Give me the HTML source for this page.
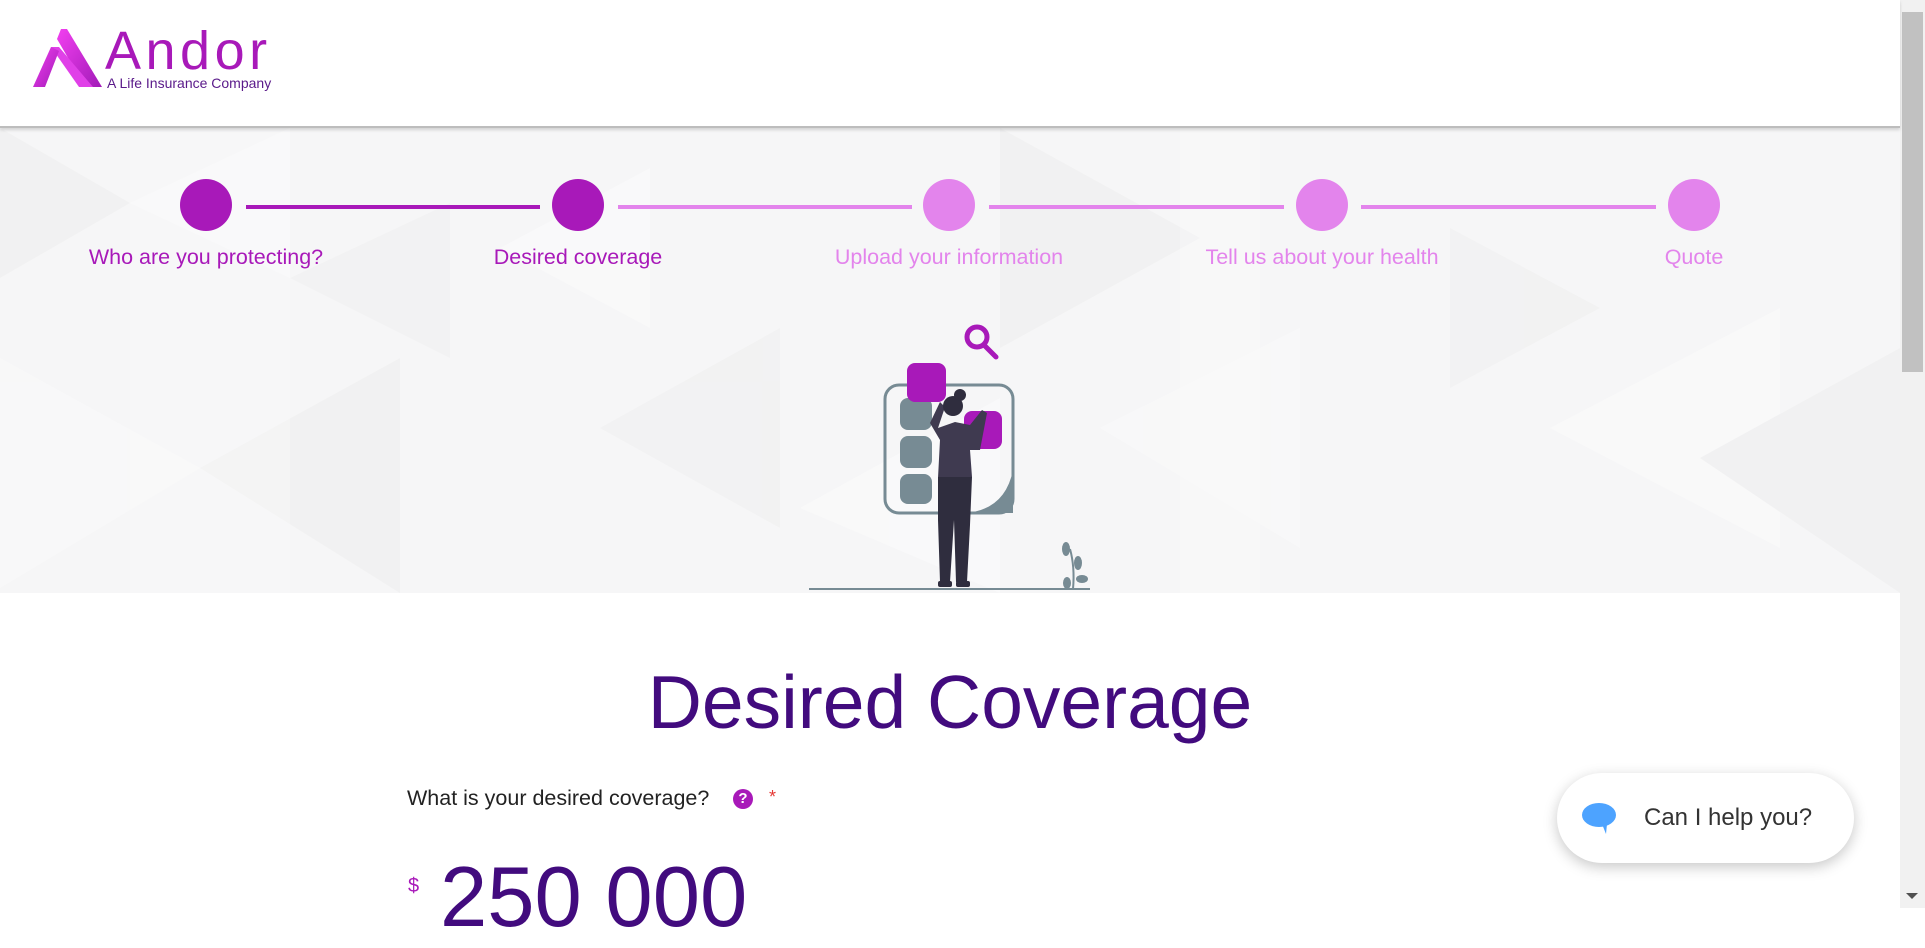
<!DOCTYPE html>
<html><head><meta charset="utf-8"><style>
*{margin:0;padding:0;box-sizing:border-box}
body{width:1925px;height:908px;overflow:hidden;background:#fff;font-family:"Liberation Sans",sans-serif;position:relative}
.hdr{position:absolute;left:0;top:0;width:1900px;height:128px;background:#fff;border-bottom:2px solid #bdbdbd;box-shadow:0 2px 3px rgba(0,0,0,.15);z-index:2}
.banner{position:absolute;left:0;top:128px;width:1900px;height:465px;background:#f6f6f7;overflow:hidden}
.abs{position:absolute}
.lbl{position:absolute;top:117px;font-size:21.5px;transform:translateX(-50%);white-space:nowrap}
.sb{position:absolute;left:1900px;top:0;width:25px;height:908px;background:#f1f1f1}
.th{position:absolute;left:1902px;top:12px;width:21px;height:360px;background:#c1c1c1}
</style></head><body>
<div class="banner">
<svg width="1900" height="465" style="position:absolute;left:0;top:0">
<g opacity="0.6">
<polygon points="0,0 130,75 0,150" fill="#efefef"/>
<polygon points="130,75 290,0 290,150" fill="#fbfbfb"/>
<polygon points="290,150 450,75 450,230" fill="#f1f1f1"/>
<polygon points="0,230 200,340 0,460" fill="#fafafa"/>
<polygon points="200,340 400,230 400,465" fill="#efefef"/>
<polygon points="500,120 650,40 650,200" fill="#fbfbfb"/>
<polygon points="600,300 780,200 780,400" fill="#f0f0f0"/>
<polygon points="1000,0 1200,110 1000,220" fill="#efefef"/>
<polygon points="1100,300 1300,200 1300,420" fill="#fafafa"/>
<polygon points="1450,100 1600,180 1450,260" fill="#f0f0f0"/>
<polygon points="1550,300 1780,180 1780,420" fill="#fbfbfb"/>
<polygon points="1700,330 1900,220 1900,465" fill="#efefef"/>
<polygon points="800,380 1000,270 1000,465" fill="#fbfbfb"/>
<rect x="130" y="0" width="160" height="465" fill="#fff" opacity="0.25"/>
<rect x="1180" y="0" width="80" height="465" fill="#fff" opacity="0.3"/>
</g>
<line x1="246" y1="79" x2="540" y2="79" stroke="#a819b9" stroke-width="4"/>
<line x1="618" y1="79" x2="912" y2="79" stroke="#e384ec" stroke-width="4"/>
<line x1="989" y1="79" x2="1284" y2="79" stroke="#e384ec" stroke-width="4"/>
<line x1="1361" y1="79" x2="1656" y2="79" stroke="#e384ec" stroke-width="4"/>
<circle cx="206" cy="77" r="26" fill="#a819b9"/>
<circle cx="578" cy="77" r="26" fill="#a819b9"/>
<circle cx="949" cy="77" r="26" fill="#e384ec"/>
<circle cx="1322" cy="77" r="26" fill="#e384ec"/>
<circle cx="1694" cy="77" r="26" fill="#e384ec"/>
<g transform="translate(780,182)">
<rect x="105" y="75" width="128" height="128" rx="14" fill="none" stroke="#778b94" stroke-width="3"/>
<path d="M233,160 Q225,200 185,203 L233,203 Z" fill="#778b94"/>
<rect x="120" y="88" width="32" height="32" rx="8" fill="#778b94"/>
<rect x="120" y="126" width="32" height="32" rx="8" fill="#778b94"/>
<rect x="120" y="164" width="32" height="30" rx="8" fill="#778b94"/>
<rect x="127" y="53" width="39" height="39" rx="8" fill="#a819b9"/>
<rect x="184" y="101" width="38" height="38" rx="8" fill="#a819b9"/>
<circle cx="197" cy="27" r="10" fill="none" stroke="#a819b9" stroke-width="5"/>
<line x1="204" y1="35" x2="216" y2="47" stroke="#a819b9" stroke-width="5" stroke-linecap="round"/>
<path d="M150,113 L160,92 L165,97 L158,118 L175,112 L190,115 L202,100 L207,103 L200,140 L190,140 L192,167 L158,168 L160,130 Z" fill="#3f3a50"/>
<circle cx="173" cy="96" r="10" fill="#2f2d3e"/>
<circle cx="180" cy="85" r="6" fill="#2f2d3e"/>
<path d="M158,167 L192,167 L190,215 L187,272 L176,272 L174,210 L170,272 L160,272 L158,210 Z" fill="#2f2d3e"/>
<rect x="158" y="271" width="14" height="6" rx="2" fill="#2f2d3e"/>
<rect x="176" y="271" width="14" height="6" rx="2" fill="#2f2d3e"/>
<line x1="29" y1="279" x2="310" y2="279" stroke="#778b94" stroke-width="2"/>
<g transform="translate(0,17)">
<path d="M293,262 Q295,240 290,222" stroke="#778b94" stroke-width="2" fill="none"/>
<ellipse cx="286" cy="222" rx="4" ry="7" fill="#778b94"/>
<ellipse cx="298" cy="236" rx="4" ry="7" fill="#778b94"/>
<ellipse cx="302" cy="252" rx="6" ry="4" fill="#778b94"/>
<ellipse cx="287" cy="256" rx="4" ry="6" fill="#778b94"/>
</g>
</g>
</svg>
<div class="lbl" style="left:206px;color:#a819b9">Who are you protecting?</div>
<div class="lbl" style="left:578px;color:#a819b9">Desired coverage</div>
<div class="lbl" style="left:949px;color:#e384ec">Upload your information</div>
<div class="lbl" style="left:1322px;color:#e384ec">Tell us about your health</div>
<div class="lbl" style="left:1694px;color:#e384ec">Quote</div>
</div>
<div class="hdr">
<svg class="abs" style="left:33px;top:29px" width="72" height="60" viewBox="0 0 72 60">
<defs><linearGradient id="g" x1="0" y1="0" x2="1" y2="1"><stop offset="0" stop-color="#f23ff0"/><stop offset="1" stop-color="#a21bb8"/></linearGradient></defs>
<polygon points="28,0 34,0 69,58 52,58 24,10" fill="url(#g)"/>
<polygon points="18,18 26,18 60,58 46,58" fill="#e040e8"/>
<polygon points="0,58 18,18 26,22 12,58" fill="url(#g)"/>
</svg>
<div class="abs" style="left:105px;top:22px;font-size:54px;color:#a819b9;line-height:58px;letter-spacing:4.5px;font-weight:300">Andor</div>
<div class="abs" style="left:107px;top:76px;font-size:14px;color:#5a1a8a;line-height:14px">A Life Insurance Company</div>
</div>
<div class="abs" style="left:0;width:1900px;top:657px;text-align:center;font-size:75px;color:#420b7e;line-height:90px">Desired Coverage</div>
<div class="abs" style="left:407px;top:785px;font-size:21.5px;color:#222;line-height:26px">What is your desired coverage?</div>
<div class="abs" style="left:733px;top:789px;width:20px;height:20px;border-radius:50%;background:#a819b9;color:#fff;font-size:15px;font-weight:bold;text-align:center;line-height:20px">?</div>
<div class="abs" style="left:769px;top:787px;font-size:18px;color:#e53935">*</div>
<div class="abs" style="left:408px;top:875px;font-size:20px;color:#a819b9">$</div>
<div class="abs" style="left:440px;top:848px;font-size:85px;color:#420b7e;line-height:100px">250 000</div>
<div class="abs" style="left:1557px;top:773px;width:297px;height:90px;border-radius:45px;background:#fff;box-shadow:0 4px 14px rgba(0,0,0,.22)"></div>
<svg class="abs" style="left:1582px;top:802px" width="36" height="34" viewBox="0 0 36 34"><ellipse cx="17" cy="13" rx="17" ry="12" fill="#4da3ff"/><polygon points="20,22 25,22 24,32" fill="#4da3ff"/></svg>
<div class="abs" style="left:1644px;top:803px;font-size:24px;color:#333;line-height:30px">Can I help you?</div>
<div class="sb"></div><div class="th"></div>
<div class="abs" style="left:1906px;top:893px;width:0;height:0;border-left:6px solid transparent;border-right:6px solid transparent;border-top:6px solid #505050"></div>
</body></html>
